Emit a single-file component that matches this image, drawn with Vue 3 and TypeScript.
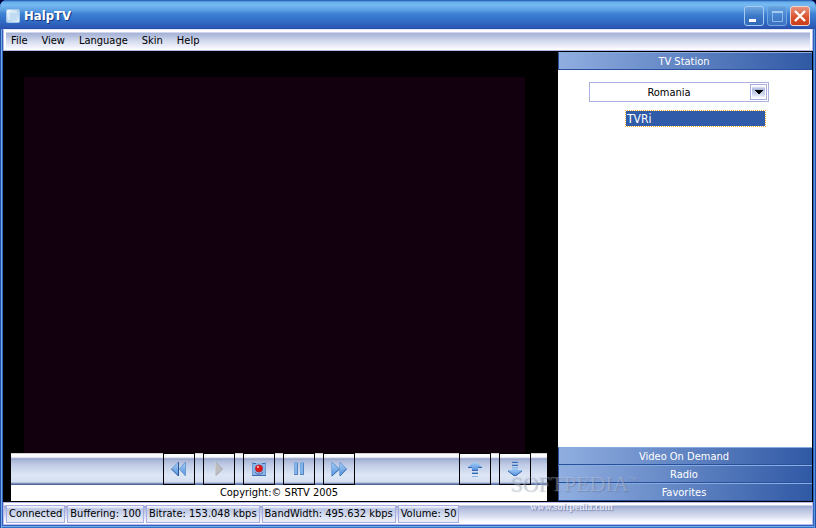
<script setup lang="ts">
import { ref } from 'vue'

const menus: string[] = ['File', 'View', 'Language', 'Skin', 'Help']
const country = ref('Romania')
const sections: string[] = ['Video On Demand', 'Radio', 'Favorites']
const status: string[] = [
  'Connected',
  'Buffering: 100',
  'Bitrate: 153.048 kbps',
  'BandWidth: 495.632 kbps',
  'Volume: 50',
]
</script>

<template>
  <div class="window">
    <header class="titlebar">
      <svg class="app-icon" viewBox="0 0 16 16" aria-hidden="true">
        <defs>
          <linearGradient id="ai" x1="0" y1="0" x2="1" y2="1">
            <stop offset="0" stop-color="#ffffff" />
            <stop offset="0.5" stop-color="#b4d2ec" />
            <stop offset="1" stop-color="#e4f2fc" />
          </linearGradient>
        </defs>
        <rect x="1" y="1" width="14" height="14" rx="2" fill="#a4c8e8" />
        <rect x="2" y="2" width="12" height="12" rx="1" fill="url(#ai)" />
        <rect x="4" y="4" width="8" height="8" fill="#c0dcf2" />
        <path d="M4 12V4H12" fill="none" stroke="#e4f2fc" />
      </svg>
      <h1>HalpTV</h1>
      <div class="window-buttons">
        <button type="button" class="wb" aria-label="Minimize">
          <svg viewBox="0 0 18 18"><rect x="4" y="12" width="7" height="3" fill="#fff" /></svg>
        </button>
        <button type="button" class="wb dim" aria-label="Maximize">
          <svg viewBox="0 0 18 18">
            <path d="M4.500 4V14.500H14.500V4" fill="none" stroke="#8db9e8" />
            <path d="M4 5H15" stroke="#a4caf0" stroke-width="2" />
          </svg>
        </button>
        <button type="button" class="wb close" aria-label="Close">
          <svg viewBox="0 0 18 18"><path d="M4 4L14 14M14 4L4 14" stroke="#fff" stroke-width="2.4" /></svg>
        </button>
      </div>
    </header>

    <nav class="menubar">
      <button v-for="m in menus" :key="m" type="button">{{ m }}</button>
    </nav>

    <main class="content">
      <section class="player">
        <div class="screen"></div>
        <div class="controls">
          <div class="group">
            <button type="button" aria-label="Rewind">
              <svg viewBox="0 0 30 30">
                <path d="M14.500 8V22L7.500 15ZM21.500 8V22L15.500 15Z" fill="url(#blue)" stroke="#6c9cd4" />
                <path d="M14.500 8V22L7.500 15" fill="none" stroke="#3c6cae" />
                <path d="M14.500 8V22" stroke="#285490" />
              </svg>
            </button>
            <button type="button" aria-label="Play">
              <svg viewBox="0 0 30 30">
                <path d="M11.500 8V22L18.500 15Z" fill="#bcbcbc" stroke="#a4a8ac" />
                <path d="M11.500 8V22" stroke="#c8ccd0" />
              </svg>
            </button>
            <button type="button" aria-label="Record">
              <svg viewBox="0 0 30 30">
                <rect x="8" y="9" width="14" height="13" fill="#88b4e8" />
                <path d="M8.500 8V22M21.500 8V22" stroke="#6c9cd8" />
                <path d="M8 21.500H22" stroke="#3c6cb0" />
                <path d="M9 9.500H12M18 9.500H21" stroke="#386cae" />
                <path d="M11 18L13 20H17L19 18" fill="none" stroke="#5c6ca8" />
                <circle cx="15" cy="14.500" r="3.500" fill="#dd1515" stroke="#b42838" />
                <rect x="13" y="12" width="2" height="2" fill="#ff9c90" />
              </svg>
            </button>
            <button type="button" aria-label="Pause">
              <svg viewBox="0 0 30 30">
                <path d="M10.500 8.500H13.500V20.500H10.500ZM16.500 8.500H19.500V20.500H16.500Z" fill="#84b4ec" stroke="#78a8e0" />
                <path d="M13.500 9V21M19.500 9V21M10 20.500H14M16 20.500H20" stroke="#5484c0" />
              </svg>
            </button>
            <button type="button" aria-label="Fast forward">
              <svg viewBox="0 0 30 30">
                <path d="M7.500 8V22L15.500 15ZM15.500 8V22L22.500 15Z" fill="url(#blue)" stroke="#5e92cc" />
                <path d="M7.500 8V22M15.500 8V22" stroke="#80acdc" />
                <path d="M8 22L15.500 15M16 22L22.500 15" stroke="#3870b4" />
              </svg>
            </button>
          </div>
          <div class="group">
            <button type="button" aria-label="Volume up">
              <svg viewBox="0 0 30 30">
                <path d="M14 8H16L22 13V14H18V16H12V14H8V13Z" fill="url(#blue)" />
                <path d="M8 13.500H12M18 13.500H22M12 16.500H18M12 19.500H18" stroke="#3568ae" />
                <path d="M12 18.500H18M12 22.500H18" stroke="#8cb4e4" />
              </svg>
            </button>
            <button type="button" aria-label="Volume down">
              <svg viewBox="0 0 30 30">
                <path d="M12 14H18V16H22V17L16 22H14L8 17V16H12Z" fill="url(#blue)" />
                <path d="M8 17L14 21.500H16L22 17" fill="none" stroke="#3568ae" />
                <path d="M12 7.500H18M12 10.500H18M12 13.500H18" stroke="#8cb4e4" />
                <path d="M12 8.500H18M12 11.500H18" stroke="#3c6cae" />
              </svg>
            </button>
          </div>
          <svg class="defs" aria-hidden="true">
            <defs>
              <linearGradient id="blue" x1="0" y1="0" x2="0" y2="1">
                <stop offset="0" stop-color="#a8d0f8" />
                <stop offset="1" stop-color="#5590dc" />
              </linearGradient>
            </defs>
          </svg>
        </div>
        <p class="copyright">Copyright:© SRTV 2005</p>
      </section>

      <aside class="sidebar">
        <button type="button" class="section">TV Station</button>
        <div class="stations">
          <div class="combo">
            <select v-model="country" aria-label="Country">
              <option>Romania</option>
            </select>
            <span class="arrow">
              <svg viewBox="0 0 8 5"><path d="M0 0H8V1H7V2H6V3H5V4H3V3H2V2H1V1H0Z" fill="#000" /></svg>
            </span>
          </div>
          <button type="button" class="station">TVRi</button>
        </div>
        <button v-for="s in sections" :key="s" type="button" class="section">{{ s }}</button>
      </aside>
    </main>

    <footer class="statusbar">
      <span v-for="s in status" :key="s" class="cell">{{ s }}</span>
    </footer>

    <div class="watermark" aria-hidden="true">
      <div class="brand">SOFTPEDIA<sup>™</sup></div>
      <div class="site">www.softpedia.com</div>
    </div>
  </div>
</template>

<style>
body {
  margin: 0;
  background: #000038;
}
</style>

<style scoped>
.window {
  position: relative;
  box-sizing: border-box;
  min-height: 100vh;
  display: flex;
  flex-direction: column;
  padding: 0 3px 3px;
  border-radius: 7px 7px 0 0;
  background: #2f63bd;
  box-shadow: inset 1px 0 #2050a8, inset 2px 0 #78aae8, inset -1px 0 #2050a8, inset -2px 0 #5a94dc, inset 0 -1px #3070c8, inset 0 -2px #70a8e8;
  overflow: hidden;
  font-family: "DejaVu Sans Condensed", "DejaVu Sans", sans-serif;
  font-stretch: condensed;
  font-size: 11px;
  line-height: 14px;
  color: #000;
}
button,
select {
  font: inherit;
  color: inherit;
  margin: 0;
  padding: 0;
  border: 0;
  border-radius: 0;
  background: none;
}
svg {
  display: block;
}
.titlebar {
  display: flex;
  align-items: center;
  height: 29px;
  margin: 0 -3px;
  padding: 2px 6px 0 5px;
  box-sizing: border-box;
  background: linear-gradient(#1d4fa8 0, #65b0ee 2px, #78b9f0 5px, #5ba0e4 10px, #3c80d2 14px, #3370c8 20px, #2d5cb8 26px, #2850ac 29px);
}
.app-icon {
  width: 16px;
  height: 16px;
}
h1 {
  flex: 1;
  margin: 0 0 0 3px;
  font-size: 13px;
  line-height: 16px;
  font-weight: bold;
  color: #fff;
  text-shadow: 1px 1px #17367c;
}
.window-buttons {
  display: flex;
  gap: 3px;
}
.wb {
  width: 20px;
  height: 20px;
  box-sizing: border-box;
  border: 1px solid #a4ccf4;
  border-radius: 3px;
  background: linear-gradient(#70a8e0, #3c78c8 50%, #3468b8);
}
.wb.dim {
  border-color: #70a8e4;
  background: linear-gradient(#64a0dc, #4684d0 50%, #3c70c0);
}
.wb.close {
  border-color: #f0d4d0;
  background: linear-gradient(#e89480, #dc5430 55%, #c83c18);
}
.menubar {
  display: flex;
  align-items: center;
  gap: 14px;
  height: 22px;
  box-sizing: border-box;
  padding: 2px 7px 0;
  border: 1px solid #b4b8e8;
  border-top-color: #e4e4f8;
  background: linear-gradient(#fff 0, #fcfcff 2px, #a4b0d6 3px, #b4bfde 6px, #d8dff0 12px, #f0f0fb 17px, #fff 20px);
  box-shadow: inset 2px 0 #fff, inset -2px 0 #fff;
}
.content {
  flex: 1;
  display: flex;
  padding: 1px 1px 1px 0;
  background: #000;
}
.player {
  flex: 1;
  display: flex;
  flex-direction: column;
  padding: 0 11px 0 8px;
}
.screen {
  flex: 1;
  min-height: 240px;
  margin: 25px 22px 0 13px;
  background: #12000f;
}
.controls {
  display: flex;
  justify-content: space-between;
  padding: 0 16px 0 152px;
  background: linear-gradient(#a0a0a0 0, #fff 1px, #f8f8fc 4px, #8c9cc6 6px, #a8b5d5 7px, #c0cce6 12px, #dde6f5 22px, #d4dff0 29px, #6074a8 31px, #44588c 32px);
}
.group {
  display: flex;
  gap: 8px;
}
.controls button {
  width: 32px;
  height: 32px;
  box-sizing: border-box;
  border: 1px solid #000;
}
.defs {
  position: absolute;
  width: 0;
  height: 0;
}
.copyright {
  margin: 0;
  height: 16px;
  line-height: 16px;
  background: #fff;
  text-align: center;
}
.sidebar {
  width: 254px;
  display: flex;
  flex-direction: column;
  background: #fff;
}
.section {
  height: 18px;
  box-sizing: border-box;
  padding: 1px 3px 0 0;
  border: solid #28509c;
  border-width: 1px 0 1px 1px;
  border-top-color: #88aee0;
  background: linear-gradient(90deg, #90aee0, #3059a5);
  color: #fff;
  line-height: 15px;
}
.stations {
  flex: 1;
  display: flex;
  flex-direction: column;
  gap: 8px;
  padding: 12px 43px 12px 31px;
}
.combo {
  position: relative;
}
.combo select {
  appearance: none;
  display: block;
  width: 100%;
  height: 20px;
  box-sizing: border-box;
  padding: 1px 20px 0 0;
  border: 1px solid #acb0e0;
  background: #fff;
  text-align-last: center;
}
.arrow {
  position: absolute;
  top: 2px;
  right: 2px;
  width: 17px;
  height: 16px;
  box-sizing: border-box;
  display: flex;
  align-items: center;
  justify-content: center;
  border: 1px solid #a8ace0;
  background: linear-gradient(#fff 1px, #acb8dc 4px, #d4dcf0 10px, #fff 13px);
  box-shadow: inset 1px 0 #fff, inset -1px 0 #fff;
  pointer-events: none;
}
.arrow svg {
  width: 8px;
  height: 5px;
}
.station {
  height: 17px;
  margin: 0 3px 0 36px;
  padding: 1px 0 0 1px;
  box-sizing: border-box;
  border: 1px dotted #f0a830;
  background: #305ba8 padding-box;
  color: #fff;
  font-size: 12px;
  line-height: 14px;
  text-align: left;
}
.statusbar {
  display: flex;
  align-items: center;
  gap: 2px;
  height: 23px;
  box-sizing: border-box;
  padding: 0 2px;
  border: 1px solid #b8b8ec;
  background: linear-gradient(#fff 0, #fff 2px, #98a6d0 3px, #b4bfde 6px, #dce2f2 14px, #f8f8ff 18px, #fff 21px);
}
.cell {
  height: 18px;
  box-sizing: border-box;
  padding: 0 2px;
  border: 1px solid #a8ace0;
  background: linear-gradient(#eef0fa 1px, #bac5e2 3px, #d4dcef 9px, #e8ecf8 15px);
  line-height: 16px;
  white-space: nowrap;
}
.watermark {
  position: absolute;
  right: 176px;
  bottom: 14px;
  width: 130px;
  font-family: "Liberation Serif", serif;
  white-space: nowrap;
  pointer-events: none;
}
.brand {
  font-size: 22px;
  line-height: 24px;
  padding-bottom: 4px;
  color: rgba(200, 208, 228, 0.35);
  text-shadow: 1px 1px 1px rgba(90, 100, 125, 0.35);
}
.brand sup {
  font-size: 9px;
  line-height: 0;
}
.site {
  padding-left: 20px;
  font-size: 10px;
  line-height: 14px;
  font-weight: bold;
  color: rgba(245, 247, 255, 0.8);
  text-shadow: 1px 1px 1px rgba(90, 100, 150, 0.6);
}
</style>
